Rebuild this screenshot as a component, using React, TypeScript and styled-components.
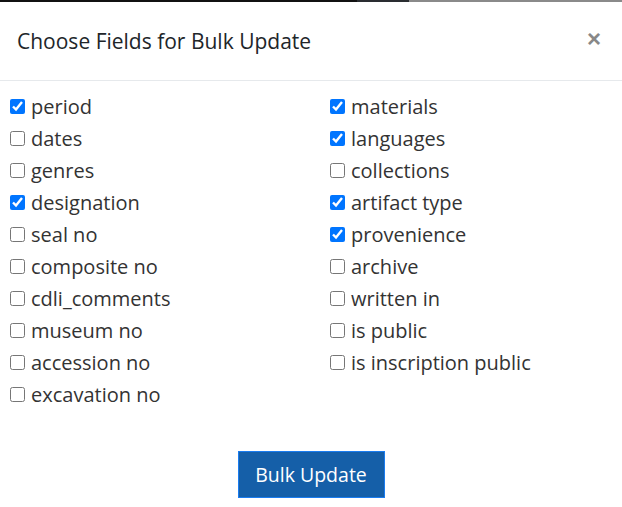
import React from "react";
import styled, { createGlobalStyle } from "styled-components";

const Global = createGlobalStyle`
  html, body { margin: 0; padding: 0; background: #fff; }
  body { font-family: "Open Sans", "Noto Sans", sans-serif; color: #212529; }
`;

const TopStrip = styled.div`
  height: 2px;
  display: flex;
`;
const StripPart = styled.div<{ $w: string; $c: string }>`
  width: ${(p) => p.$w};
  background: ${(p) => p.$c};
`;

const Modal = styled.div`
  width: 622px;
  background: #fff;
`;

const Header = styled.div`
  display: flex;
  align-items: center;
  justify-content: space-between;
  height: 78px;
  padding: 0 21px 0 17px;
  border-bottom: 1px solid #e6e9ec;
`;

const Title = styled.h5`
  margin: 0;
  font-size: 21px;
  font-weight: 400;
  color: #212529;
`;

const Close = styled.button`
  border: none;
  background: none;
  padding: 0;
  font-size: 24px;
  font-weight: 700;
  color: #888;
  line-height: 1;
  font-family: "Liberation Sans", Arial, sans-serif;
  margin-top: -4px;
`;

const Body = styled.div`
  display: grid;
  grid-template-columns: 320px 1fr;
  padding: 9px 0 0 6px;
`;

const Column = styled.div`
  display: flex;
  flex-direction: column;
`;

const Item = styled.label`
  display: flex;
  align-items: center;
  height: 32px;
  font-size: 20px;
  color: #333;
  input {
    margin: 0 6px 0 4px;
    width: 15px;
    height: 15px;
  }
`;

const Footer = styled.div`
  display: flex;
  justify-content: center;
  padding-top: 41px;
`;

const Button = styled.button`
  width: 147px;
  height: 47px;
  background: #155fa8;
  border: 1px solid #1a7cf0;
  color: #fff;
  font-family: "Open Sans", "Noto Sans", sans-serif;
  font-size: 19.5px;
  padding: 0;
`;

const left: [string, boolean][] = [
  ["period", true],
  ["dates", false],
  ["genres", false],
  ["designation", true],
  ["seal no", false],
  ["composite no", false],
  ["cdli_comments", false],
  ["museum no", false],
  ["accession no", false],
  ["excavation no", false],
];
const right: [string, boolean][] = [
  ["materials", true],
  ["languages", true],
  ["collections", false],
  ["artifact type", true],
  ["provenience", true],
  ["archive", false],
  ["written in", false],
  ["is public", false],
  ["is inscription public", false],
];

const Col = ({ items }: { items: [string, boolean][] }) => (
  <Column>
    {items.map(([n, c]) => (
      <Item key={n}>
        <input type="checkbox" defaultChecked={c} />
        {n}
      </Item>
    ))}
  </Column>
);

export default function App() {
  return (
    <>
      <Global />
      <TopStrip>
        <StripPart $w="357px" $c="#111" />
        <StripPart $w="52px" $c="#2a2d31" />
        <StripPart $w="213px" $c="#8a8a8a" />
      </TopStrip>
      <Modal>
        <Header>
          <Title>Choose Fields for Bulk Update</Title>
          <Close>×</Close>
        </Header>
        <Body>
          <Col items={left} />
          <Col items={right} />
        </Body>
        <Footer>
          <Button>Bulk Update</Button>
        </Footer>
      </Modal>
    </>
  );
}
